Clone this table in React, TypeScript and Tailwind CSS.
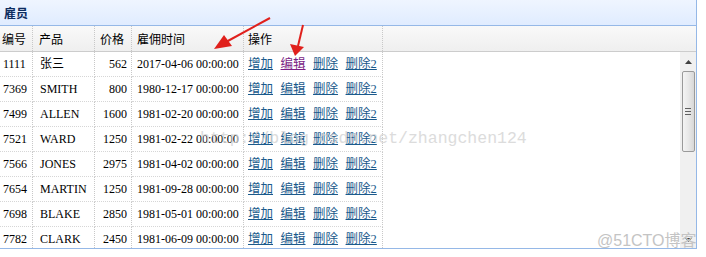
import React from "react";

const rows = [
  ["1111", "张三", "562", "2017-04-06 00:00:00"],
  ["7369", "SMITH", "800", "1980-12-17 00:00:00"],
  ["7499", "ALLEN", "1600", "1981-02-20 00:00:00"],
  ["7521", "WARD", "1250", "1981-02-22 00:00:00"],
  ["7566", "JONES", "2975", "1981-04-02 00:00:00"],
  ["7654", "MARTIN", "1250", "1981-09-28 00:00:00"],
  ["7698", "BLAKE", "2850", "1981-05-01 00:00:00"],
  ["7782", "CLARK", "2450", "1981-06-09 00:00:00"],
];

const cell = "border-r border-dotted border-r-[#c8c8c8] border-b border-b-[#d6d6d6]";

export default function App() {
  return (
    <div
      className="relative w-[706px] h-[257px] bg-white overflow-hidden"
      style={{ fontFamily: '"Liberation Serif", "Noto Sans CJK SC", serif' }}
    >
      <div className="w-[697px] h-[249px] border-r border-b border-[#95b8e7] flex flex-col">
        {/* title */}
        <div
          className="h-[26px] shrink-0 border-b border-[#95b8e7] bg-gradient-to-b from-[#eff5ff] to-[#e0ecff] flex items-center pl-[4px] text-[12px] font-bold text-[#0e2d5f]"
          style={{ fontFamily: '"Noto Sans CJK SC", sans-serif' }}
        >
          雇员
        </div>
        {/* header */}
        <div
          className="h-[26px] shrink-0 border-b border-[#cccccc] bg-gradient-to-b from-[#f9f9f9] to-[#efefef] flex text-[12px] text-black"
          style={{ fontFamily: '"Noto Sans CJK SC", sans-serif' }}
        >
          <div className="w-[33px] border-r border-dotted border-[#c8c8c8] flex items-center pl-[2px]">编号</div>
          <div className="w-[62px] border-r border-dotted border-[#c8c8c8] flex items-center pl-[6px]">产品</div>
          <div className="w-[37px] border-r border-dotted border-[#c8c8c8] flex items-center pl-[5px]">价格</div>
          <div className="w-[112px] border-r border-dotted border-[#c8c8c8] flex items-center pl-[5px]">雇佣时间</div>
          <div className="w-[139px] border-r border-dotted border-[#c8c8c8] flex items-center pl-[4px]">操作</div>
        </div>
        {/* body */}
        <div className="flex-1 flex min-h-0">
          <div className="flex-1 overflow-hidden text-[12px] text-black">
            {rows.map((r, i) => (
              <div key={r[0]} className="h-[25px] flex shrink-0">
                <div className={`w-[33px] ${cell} flex items-center pl-[3px]`}>{r[0]}</div>
                <div className={`w-[62px] ${cell} flex items-center pl-[7px]`}>{r[1]}</div>
                <div className={`w-[37px] ${cell} flex items-center justify-end pr-[4px]`}>{r[2]}</div>
                <div className={`w-[112px] ${cell} flex items-center pl-[5px] whitespace-nowrap`}>{r[3]}</div>
                <div className={`w-[139px] ${cell} flex items-center pl-[4px] gap-[7.5px] whitespace-nowrap text-[12.5px]`}>
                  <span className="underline text-[#1a5a8c]">增加</span>
                  <span className={`underline ${i === 0 ? "text-[#7b1f86]" : "text-[#1a5a8c]"}`}>编辑</span>
                  <span className="underline text-[#1a5a8c]">删除</span>
                  <span className="underline text-[#1a5a8c]">删除2</span>
                </div>
              </div>
            ))}
          </div>
          {/* scrollbar */}
          <div className="w-[16px] shrink-0 bg-[#f0f0f0] flex flex-col items-center">
            <div className="h-[19px] w-full flex items-center justify-center">
              <svg width="7" height="4" viewBox="0 0 7 4"><path d="M0 4 L3.5 0 L7 4 Z" fill="#404040" /></svg>
            </div>
            <div className="h-[81px] w-[13px] rounded-[2px] border border-[#9a9a9a] bg-gradient-to-r from-[#f4f4f4] via-[#e8e8e8] to-[#d8d8d8] flex flex-col items-center justify-center gap-[2px]">
              <div className="w-[6px] h-[1px] bg-[#606060]" />
              <div className="w-[6px] h-[1px] bg-[#606060]" />
              <div className="w-[6px] h-[1px] bg-[#606060]" />
            </div>
            <div className="flex-1" />
            <div className="h-[16px] w-full flex items-center justify-center">
              <svg width="7" height="4" viewBox="0 0 7 4"><path d="M0 0 L3.5 4 L7 0 Z" fill="#404040" /></svg>
            </div>
          </div>
        </div>
      </div>

      {/* watermark */}
      <div
        className="absolute left-[200px] top-[127px] text-[16.5px] text-[#d4d4d4] opacity-80 whitespace-nowrap pointer-events-none"
        style={{ fontFamily: '"Liberation Mono", monospace' }}
      >
        http://blog.csdn.net/zhangchen124
      </div>
      <div
        className="absolute left-[597px] top-[229px] text-[16px] text-[#c4c4c4] whitespace-nowrap pointer-events-none"
        style={{ fontFamily: '"Liberation Sans", "Noto Sans CJK SC", sans-serif' }}
      >
        @51CTO博客
      </div>

      {/* red annotation arrows */}
      <svg className="absolute left-0 top-0 pointer-events-none" width="706" height="257">
        <line x1="270" y1="18" x2="226" y2="42" stroke="#e0201c" strokeWidth="2" />
        <path d="M214 49 L224 35 L232 46 Z" fill="#e0201c" />
        <line x1="303" y1="25" x2="298" y2="46" stroke="#e0201c" strokeWidth="2" />
        <path d="M295 56 L290 44 L304 47 Z" fill="#e0201c" />
      </svg>
    </div>
  );
}
